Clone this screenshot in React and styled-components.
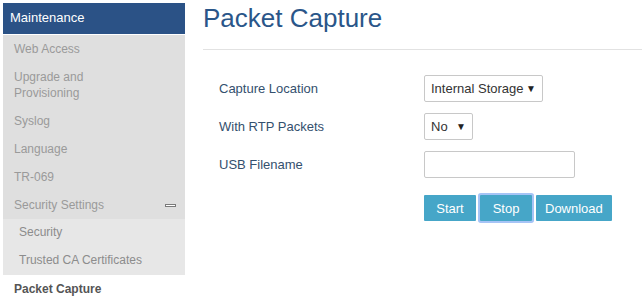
import React from 'react';
import styled, {createGlobalStyle} from 'styled-components';

const GlobalStyle = createGlobalStyle`
    html, body {
        margin : 0;
        padding : 0;
        background : #ffffff;
        font-family : "Liberation Sans", Arial, sans-serif;
    }
`

const menu = [
    {label : "Web Access"},
    {label : "Upgrade and Provisioning", wrap : true},
    {label : "Syslog"},
    {label : "Language"},
    {label : "TR-069"},
    {label : "Security Settings", open : true},
]

const subMenu = ["Security", "Trusted CA Certificates"]

function App() {
    return (
        <>
            <GlobalStyle/>
            <Page>
                <Sidebar>
                    <SideHeader>Maintenance</SideHeader>
                    <SideGroup>
                        {menu.map(item => (
                            <SideItem key={item.label}>
                                <ItemText wrap={item.wrap ? 1 : 0}>{item.label}</ItemText>
                                {item.open && <Collapse/>}
                            </SideItem>
                        ))}
                    </SideGroup>
                    <SubGroup>
                        {subMenu.map(label => <SubItem key={label}>{label}</SubItem>)}
                    </SubGroup>
                    <ActiveItem>Packet Capture</ActiveItem>
                </Sidebar>
                <Main>
                    <Title>Packet Capture</Title>
                    <Divider/>
                    <Form>
                        <Label>Capture Location</Label>
                        <Field>
                            <Select width={119}>
                                <span>Internal Storage</span>
                                <Arrow>▼</Arrow>
                            </Select>
                        </Field>
                        <Label>With RTP Packets</Label>
                        <Field>
                            <Select width={49}>
                                <span>No</span>
                                <Arrow>▼</Arrow>
                            </Select>
                        </Field>
                        <Label>USB Filename</Label>
                        <Field>
                            <TextInput type="text"/>
                        </Field>
                        <span/>
                        <Buttons>
                            <Button>Start</Button>
                            <Button focused>Stop</Button>
                            <Button>Download</Button>
                        </Buttons>
                    </Form>
                </Main>
            </Page>
        </>
    )
}

export default App

const Page = styled.div`
    display : flex;
    align-items : flex-start;
    gap : 18px;
    padding : 3px 0 0 3px;
    width : 642px;
    height : 305px;
    box-sizing : border-box;
    overflow : hidden;
`
const Sidebar = styled.div`
    flex : 0 0 182px;
    display : flex;
    flex-direction : column;
    font-size : 12px;
`
const SideHeader = styled.div`
    height : 31px;
    line-height : 30px;
    padding-left : 7px;
    background : #2b5286;
    color : #ffffff;
    font-size : 13px;
    border-bottom : 1px solid #ffffff;
`
const SideGroup = styled.div`
    background : #dfdfdf;
`
const SideItem = styled.div`
    display : flex;
    align-items : center;
    justify-content : space-between;
    padding : 6px 9px 6px 11px;
    line-height : 16px;
    color : #9a9a9a;
`
const ItemText = styled.span`
    max-width : ${props => props.wrap ? "90px" : "none"};
`
const Collapse = styled.span`
    display : block;
    width : 9px;
    height : 1px;
    border : 1px solid #7a7a7a;
    background : #ffffff;
`
const SubGroup = styled.div`
    background : #e7e7e7;
`
const SubItem = styled.div`
    padding : 5px 0 7px 16px;
    line-height : 16px;
    color : #8c8c8c;
`
const ActiveItem = styled.div`
    padding : 6px 11px;
    line-height : 16px;
    font-weight : bold;
    color : #555555;
`
const Main = styled.div`
    flex : 1;
    display : flex;
    flex-direction : column;
`
const Title = styled.h1`
    margin : 0;
    font-size : 26px;
    line-height : 30px;
    font-weight : normal;
    color : #2a5689;
`
const Divider = styled.div`
    margin-top : 16px;
    height : 1px;
    background : #e2e2e2;
`
const Form = styled.div`
    display : grid;
    grid-template-columns : 205px auto;
    row-gap : 11px;
    align-items : center;
    padding : 25px 0 0 16px;
    font-size : 13px;
`
const Label = styled.div`
    color : #34506e;
`
const Field = styled.div`
    display : flex;
    height : 27px;
`
const Select = styled.div`
    display : flex;
    align-items : center;
    justify-content : space-between;
    width : ${props => props.width}px;
    box-sizing : border-box;
    padding : 0 6px 0 6px;
    border : 1px solid #c8c8c8;
    border-radius : 2px;
    color : #333333;
    background : #ffffff;
`
const Arrow = styled.span`
    font-size : 10px;
    color : #222222;
`
const TextInput = styled.input`
    width : 151px;
    height : 27px;
    box-sizing : border-box;
    margin : 0;
    border : 1px solid #c8c8c8;
    border-radius : 2px;
    outline : none;
`
const Buttons = styled.div`
    display : flex;
    gap : 3px;
    margin-top : 6px;
`
const Button = styled.button`
    min-width : 52px;
    height : 26px;
    padding : 0 9px;
    border : none;
    border-radius : 1px;
    background : #46a6c8;
    color : #ffffff;
    font-family : "Liberation Sans", Arial, sans-serif;
    font-size : 13px;
    box-shadow : ${props => props.focused ? "0 0 0 2px #a6c4f6" : "none"};
    margin : ${props => props.focused ? "0 1px" : "0"};
`
